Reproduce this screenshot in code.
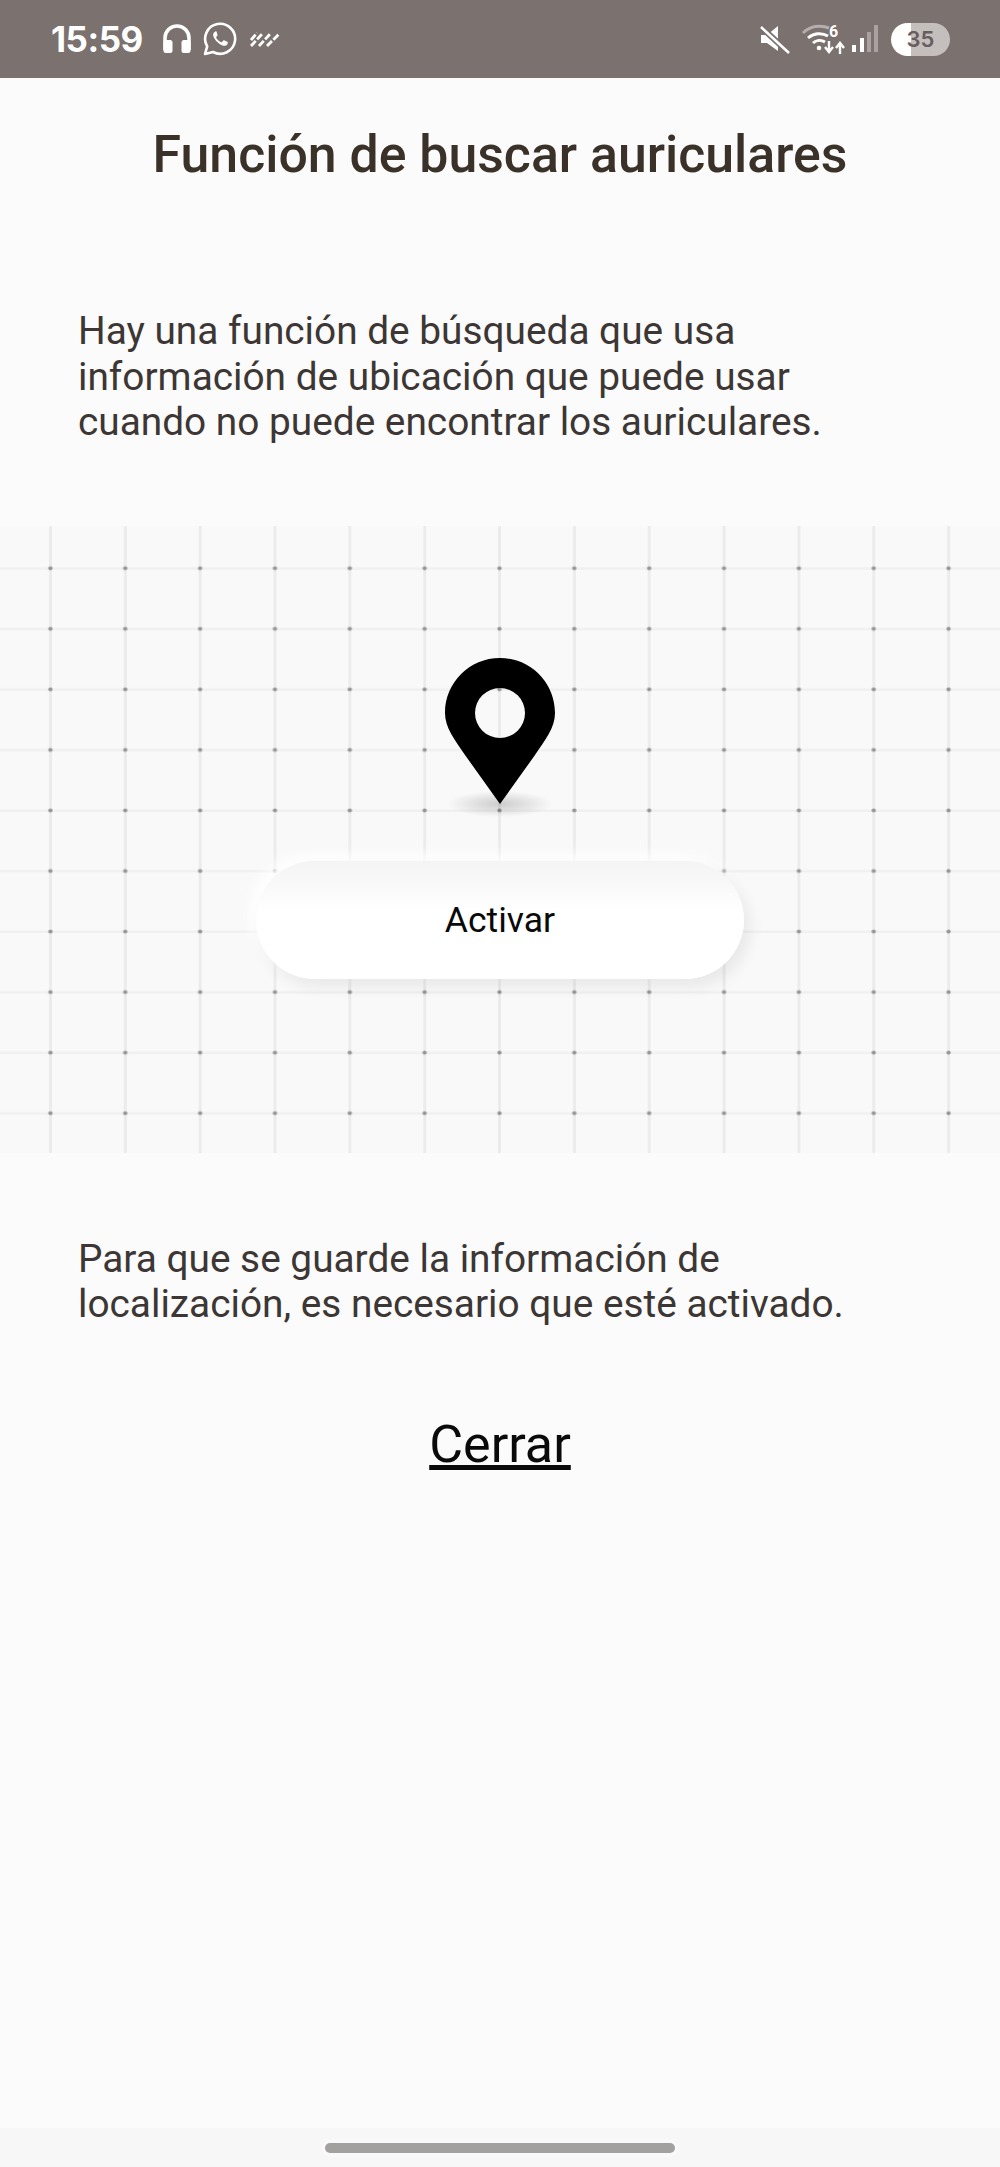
<script>
  const paragraphs = [
    "Hay una función de búsqueda que usa información de ubicación que puede usar cuando no puede encontrar los auriculares.",
    "Para que se guarde la información de localización, es necesario que esté activado."
  ];
</script>

<div class="page">
  <header class="status">
    <div class="status-left">
      <span class="time">15:59</span>
      <svg class="ic-head" viewBox="0 0 28 30" width="28" height="30">
        <path d="M2 26V14a12 12 0 0 1 24 0v12" fill="none" stroke="#fff" stroke-width="3.6" />
        <rect x="0.5" y="16" width="9" height="13" rx="2.5" fill="#fff" />
        <rect x="18.5" y="16" width="9" height="13" rx="2.5" fill="#fff" />
      </svg>
      <svg class="ic-wa" viewBox="0 0 34 34" width="34" height="34">
        <path d="M2 32l2.2-7.6A15 15 0 1 1 10 30z" fill="none" stroke="#fff" stroke-width="2.6" stroke-linejoin="round" />
        <path d="M12.3 9.5c-1.5.6-2.6 2.4-2 4.6 1.2 4 5.6 8.4 9.8 9.6 2.2.5 4-.6 4.6-2.2.2-.6.2-1.2 0-1.4l-3.6-1.8c-.4-.1-.6 0-.8.3l-1.2 1.5c-.3.3-.5.3-.9.2-2-.9-4-2.6-5-4.6-.2-.4-.1-.6.1-.8l1.1-1.4c.2-.2.2-.5.1-.7L13.600 9.700c-.3-.5-.8-.4-1.300-.2z" fill="#fff" />
      </svg>
      <svg class="ic-bars" viewBox="0 0 30 16" width="30" height="16">
        <g stroke="#fff" stroke-width="2.8" stroke-dasharray="7 2">
          <path d="M1 9L7 2" />
          <path d="M1 15L13 2" />
          <path d="M9 15L20 3" />
          <path d="M17 15L29 3" />
        </g>
      </svg>
    </div>
    <div class="status-right">
      <svg class="ic-mute" viewBox="0 0 30 30" width="30" height="30">
        <path d="M1 11h6l11-9v25L7 19H1z" fill="#fff" />
        <path d="M0 2l29 27" stroke="#7b716f" stroke-width="6" />
        <path d="M1 3l28 26" stroke="#fff" stroke-width="2.6" />
      </svg>
      <svg class="ic-wifi" viewBox="0 0 44 32" width="44" height="32">
        <path d="M1 10a24 24 0 0 1 26-5" fill="none" stroke="#b5aeac" stroke-width="3" />
        <path d="M6 15a17 17 0 0 1 20-2" fill="none" stroke="#fff" stroke-width="3" />
        <path d="M11 20a10 10 0 0 1 12-1" fill="none" stroke="#fff" stroke-width="3" />
        <circle cx="17" cy="25" r="2.300" fill="#fff" />
        <path d="M27 18v10M23 24l4 5 4-5M38 31V21M34 25l4-5 4 5" fill="none" stroke="#fff" stroke-width="2.400" />
        <text x="27" y="14" class="six">6</text>
      </svg>
      <svg class="ic-signal" viewBox="0 0 26 28" width="26" height="28">
        <rect x="0" y="20" width="4" height="7" fill="#fff" />
        <rect x="8" y="13" width="4" height="14" fill="#fff" />
        <rect x="15" y="7" width="4" height="20" fill="#a9a2a0" />
        <rect x="22" y="0" width="4" height="27" fill="#a9a2a0" />
      </svg>
      <div class="battery"><span>35</span></div>
    </div>
  </header>

  <h1>Función de buscar auriculares</h1>

  <p class="top-text">{paragraphs[0]}</p>

  <section class="map">
    <div class="pin">
      <svg viewBox="0 0 110 146" width="110" height="146">
        <path fill-rule="evenodd" d="M55 0C24.600 0 0 24.400 0 55C0 70 10 82 20 97L55 146L90 97C100 82 110 70 110 55C110 24.400 85.400 0 55 0zM55 30a25 25 0 1 1 0 50 25 25 0 0 1 0-50z" fill="#000" />
      </svg>
      <div class="pin-shadow"></div>
    </div>
    <button class="activate">Activar</button>
  </section>

  <p class="bottom-text">{paragraphs[1]}</p>

  <a class="close" href="#close">Cerrar</a>

  <div class="spacer"></div>
  <div class="nav">
    <div class="home-bar"></div>
  </div>
</div>

<style>
  :global(body) {
    margin: 0;
    background: #fbfbfb;
  }

  .page {
    height: 2167px;
    display: flex;
    flex-direction: column;
    font-family: Roboto, "Liberation Sans", sans-serif;
    color: #3a3331;
    background: #fbfbfb;
    overflow: hidden;
  }

  .status {
    height: 78px;
    flex: none;
    background: #7b716f;
    display: flex;
    justify-content: space-between;
    align-items: center;
    padding: 0 50px 0 51px;
    color: #fff;
  }

  .status-left,
  .status-right {
    display: flex;
    align-items: center;
  }

  .time {
    font-size: 35px;
    font-weight: 700;
    font-family: Inter, Roboto, sans-serif;
    letter-spacing: -0.5px;
    margin-right: 20px;
  }

  .ic-wa {
    margin-left: 12px;
    margin-right: 13px;
  }

  .ic-wifi {
    margin-left: 12px;
  }

  .ic-signal {
    margin-left: 6px;
  }

  .six {
    font-family: Roboto, sans-serif;
    font-size: 16px;
    font-weight: 700;
    fill: #fff;
  }

  .battery {
    width: 59px;
    height: 33px;
    border-radius: 17px;
    margin-left: 13px;
    background: linear-gradient(90deg, #fff 0 34%, #c4bfbd 34%);
    display: flex;
    align-items: center;
    justify-content: center;
    font-family: Inter, Roboto, sans-serif;
    font-size: 22px;
    font-weight: 600;
    color: #665e5c;
  }

  h1 {
    margin: 49px 0 0;
    font-size: 51.800px;
    line-height: 56px;
    font-weight: 500;
    text-align: center;
    color: #3a3129;
  }

  p {
    margin: 0;
    padding: 0 110px 0 78px;
    font-size: 38.800px;
    line-height: 45.500px;
    color: #3c3634;
  }

  .top-text {
    margin-top: 125px;
  }

  .map {
    margin-top: 81px;
    height: 627px;
    flex: none;
    display: flex;
    flex-direction: column;
    align-items: center;
    background-color: #f9f9f9;
    background-image:
      radial-gradient(ellipse 3px 2.500px, #959090 0 40%, transparent 100%),
      linear-gradient(90deg, transparent 36px, #ecebeb 36.500px 38.500px, transparent 39px),
      linear-gradient(180deg, transparent 29px, #f1f0f0 29.500px 31.500px, transparent 32px);
    background-size: 74.85px 60.55px;
    background-position: 13px 12px;
  }

  .pin {
    position: relative;
    margin-top: 132px;
    width: 110px;
    height: 146px;
  }

  .pin svg {
    display: block;
    position: relative;
    z-index: 1;
  }

  .pin-shadow {
    position: absolute;
    left: 3px;
    right: 3px;
    bottom: -13px;
    height: 26px;
    border-radius: 50%;
    background: radial-gradient(ellipse at center, rgba(0, 0, 0, 0.18), rgba(0, 0, 0, 0) 72%);
  }

  .activate {
    margin-top: 57px;
    width: 488px;
    height: 118px;
    border: none;
    border-radius: 59px;
    font-family: inherit;
    font-size: 35.500px;
    color: #0a0a0a;
    background: linear-gradient(180deg, #f5f4f4 0%, #fafafa 25%, #ffffff 42%, #ffffff 100%);
    box-shadow: 6px 8px 16px rgba(0, 0, 0, 0.07), -6px -6px 14px #ffffff;
  }

  .bottom-text {
    margin-top: 83px;
  }

  .close {
    margin-top: 88px;
    align-self: center;
    font-size: 52px;
    line-height: 60px;
    color: #0a0a0a;
  }

  .spacer {
    flex: 1;
  }

  .nav {
    height: 39px;
    flex: none;
    background: #f7f7f7;
    display: flex;
    justify-content: center;
    padding-top: 15px;
    box-sizing: border-box;
  }

  .home-bar {
    width: 350px;
    height: 10px;
    border-radius: 5px;
    background: #a3a0a0;
    box-shadow: 0 0 0 4px #f9f9f9;
  }
</style>
